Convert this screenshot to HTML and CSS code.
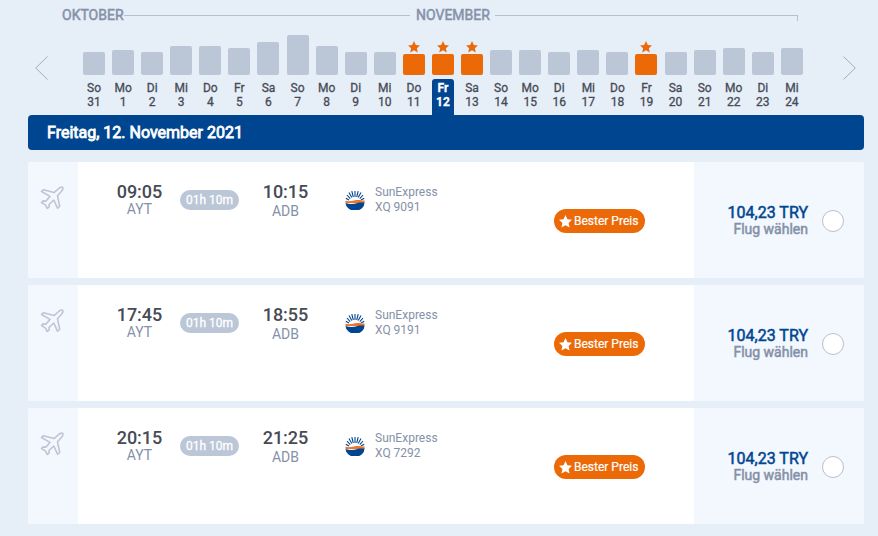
FILE: index.html
```html
<!DOCTYPE html>
<html lang="de">
<head>
    <meta charset="UTF-8">
    <meta name="viewport" content="width=device-width, initial-scale=1.0">
    <title>Flug wählen</title>
    <link rel="stylesheet" href="styles.css">
</head>
<body>
    <svg class="symbols" width="0" height="0">
        <symbol id="star" viewBox="0 0 24 24">
            <path d="M12 0l3.600 8 8.400.9-6.300 5.700 1.800 8.400L12 18.700 4.500 23l1.800-8.400L0 8.900 8.400 8z"/>
        </symbol>
        <symbol id="plane" viewBox="0 0 24 24">
            <path d="M14 6.600L19.300 2Q21.800.3 22.700 1.300Q23.500 2.700 21.500 5.200L17.500 9.800L19.700 20.200L17.600 22.300L13.800 14L9 18.500L9.200 20.800L7.300 22.500L5.300 18.900L1.500 16.600L3.200 14.900L5.800 15.200L10 10.400L1.500 5.500L3.500 3.700Z"/>
        </symbol>
        <symbol id="sun" viewBox="0 0 20 20">
            <path class="sun-rays" d="M10 7V1M8.300 7L6.800 1.200M11.700 7L13.200 1.200M6.800 7.500L4 2.500M13.200 7.500L16 2.500M5.200 8.600L2 5M14.800 8.600L18 5M4 10L.8 8.200M16 10L19.200 8.200"/>
            <path class="sun-sand" d="M.5 10.700C5 12 8 10.300 12 10S17 11 19.500 10.300V13H.5z"/>
            <path class="sun-sea" d="M.5 13C5 14.500 9 14 12.500 13S17 12.900 19.500 12.500A9.500 8 0 0 1 .5 13z"/>
        </symbol>
    </svg>

    <div class="calendar">
        <div class="months">
            <span class="month">OKTOBER</span>
            <span class="line"></span>
            <span class="month november">NOVEMBER</span>
            <span class="line line-end"></span>
        </div>
        <div class="week">
            <svg class="arrow" viewBox="0 0 13 24"><path d="M12.500 .5L.700 12l11.800 11.500"/></svg>
            <div class="days" id="days"></div>
            <svg class="arrow" viewBox="0 0 13 24"><path d="M.5 .5L12.300 12 .5 23.500"/></svg>
        </div>
    </div>

    <h2>Freitag, 12. November 2021</h2>
    <div class="flights" id="flights"></div>

    <script>
        const names = ['So', 'Mo', 'Di', 'Mi', 'Do', 'Fr', 'Sa'];
        const heights = [23, 25, 23, 29, 29, 27, 33, 40, 29, 23, 23, 21, 21, 21, 25, 25, 23, 25, 23, 21, 23, 25, 27, 23, 27];
        const best = [11, 12, 13, 19];
        const selected = 12;

        const flights = [
            { start: '09:05', end: '10:15', number: 'XQ 9091' },
            { start: '17:45', end: '18:55', number: 'XQ 9191' },
            { start: '20:15', end: '21:25', number: 'XQ 7292' }
        ];

        document.getElementById('days').innerHTML = heights.map((height, i) => {
            const isBest = best.includes(i);
            return `
                <div class="day ${isBest ? 'best' : ''} ${i === selected ? 'selected' : ''}">
                    <div class="bar-area">
                        ${isBest ? '<svg class="bar-star"><use href="#star"/></svg>' : ''}
                        <div class="bar" style="height: ${height}px"></div>
                    </div>
                    <div class="date">${names[i % 7]}<br>${i || 31}</div>
                </div>`;
        }).join('');

        document.getElementById('flights').innerHTML = flights.map(flight => `
            <div class="flight">
                <div class="side"><svg class="plane"><use href="#plane"/></svg></div>
                <div class="details">
                    <div class="airport"><b>${flight.start}</b><span>AYT</span></div>
                    <div class="duration">01h 10m</div>
                    <div class="airport arrival"><b>${flight.end}</b><span>ADB</span></div>
                    <svg class="logo"><use href="#sun"/></svg>
                    <div class="airline">SunExpress<br>${flight.number}</div>
                    <div class="badge"><svg><use href="#star"/></svg>Bester Preis</div>
                </div>
                <div class="price">
                    <div class="amount"><b>104,23 TRY</b><span>Flug wählen</span></div>
                    <div class="radio"></div>
                </div>
            </div>`).join('');
    </script>
</body>
</html>
```
FILE: styles.css
```css
* {
    box-sizing: border-box;
}
body {
    font-family: Roboto, "Liberation Sans", sans-serif;
    margin: 0;
    padding: 0 14px 0 28px;
    height: 536px;
    overflow: hidden;
    background-color: #e6eef8;
    color: #464b55;
}
.symbols {
    display: block;
}
.calendar {
    height: 115px;
}
.months {
    display: flex;
    align-items: center;
    height: 30px;
    padding: 0 66px 0 34px;
}
.month {
    width: 62px;
    font-size: 14px;
    font-weight: 400;
    -webkit-text-stroke: 0.5px;
    color: #8591a8;
}
.november {
    width: 75px;
    margin: 0 4px 0 6px;
}
.line {
    width: 286px;
    height: 1px;
    background-color: #b5c0d1;
}
.line-end {
    flex: 1;
    height: 6px;
    margin-top: 5px;
    background: none;
    border-top: 1px solid #b5c0d1;
    border-right: 1px solid #b5c0d1;
}
.week {
    display: flex;
    height: 85px;
    padding: 0 8px 0 7px;
    justify-content: space-between;
}
.arrow {
    width: 13px;
    height: 24px;
    margin-top: 26px;
    fill: none;
    stroke: #a3acba;
}
.days {
    display: flex;
    justify-content: space-between;
    width: 720px;
    margin-right: 5px;
}
.day {
    width: 22px;
}
.bar-area {
    display: flex;
    flex-direction: column;
    justify-content: flex-end;
    align-items: center;
    height: 45px;
}
.bar {
    width: 22px;
    border-radius: 2px;
    background-color: #bbc6d7;
}
.bar-star {
    width: 12px;
    height: 12px;
    margin-bottom: 1px;
    fill: #ec6907;
}
.best .bar {
    background-color: #ec6907;
}
.date {
    height: 36px;
    margin-top: 4px;
    padding-top: 2px;
    border-radius: 3px 3px 0 0;
    font-size: 12px;
    font-weight: 400;
    -webkit-text-stroke: 0.3px;
    line-height: 14px;
    text-align: center;
}
.selected .date {
    background-color: #004590;
    color: #fff;
    font-weight: bold;
}
h2 {
    height: 35px;
    margin: 0 0 12px;
    padding-left: 19px;
    border-radius: 4px;
    background-color: #004590;
    color: #fff;
    font-size: 16px;
    font-weight: 400;
    -webkit-text-stroke: 0.8px;
    line-height: 35px;
}
.flights {
    display: grid;
    gap: 7px;
}
.flight {
    display: flex;
    height: 116px;
    border-radius: 3px;
    overflow: hidden;
    background-color: #fff;
}
.side {
    width: 50px;
    padding: 24px 0 0 12px;
    background-color: #f3f7fe;
}
.plane {
    width: 24px;
    height: 24px;
    fill: none;
    stroke: #bcc5d5;
    stroke-width: 1.6;
    stroke-linejoin: round;
}
.details {
    display: flex;
    align-items: flex-start;
    width: 616px;
    padding-left: 37px;
}
.airport {
    width: 49px;
    padding-top: 19px;
    text-align: center;
}
.airport b, .airport span {
    display: block;
}
.airport b {
    font-size: 18px;
    font-weight: 500;
    line-height: 21px;
}
.airport span {
    color: #8591a8;
    font-size: 14px;
    line-height: 15px;
}
.arrival span {
    margin-top: 2px;
}
.duration {
    width: 59px;
    height: 20px;
    margin: 28px 22px 0 16px;
    border-radius: 10px;
    background-color: #bbc6d7;
    color: #fff;
    font-size: 12px;
    font-weight: 400;
    -webkit-text-stroke: 0.3px;
    line-height: 20px;
    text-align: center;
}
.logo {
    width: 20px;
    height: 20px;
    margin: 28px 10px 0 35px;
}
.sun-rays {
    fill: none;
    stroke: #004590;
    stroke-width: 1.1;
}
.sun-sand {
    fill: #ec762b;
}
.sun-sea {
    fill: #004590;
}
.airline {
    width: 179px;
    padding-top: 23px;
    color: #8591a8;
    font-size: 12px;
    line-height: 15px;
}
.badge {
    display: flex;
    align-items: center;
    width: 91px;
    height: 24px;
    margin-top: 47px;
    padding-left: 5px;
    border-radius: 12px;
    background-color: #ec6907;
    color: #fff;
    font-size: 12px;
    font-weight: 400;
    -webkit-text-stroke: 0.2px;
    white-space: nowrap;
}
.badge svg {
    width: 13px;
    height: 13px;
    margin-right: 2px;
    fill: #fff;
}
.price {
    display: flex;
    flex: 1;
    align-items: center;
    justify-content: flex-end;
    padding: 1px 20px 0 0;
    background-color: #f3f7fe;
}
.amount {
    padding-top: 1px;
    text-align: right;
}
.amount b, .amount span {
    display: block;
    font-weight: 400;
    -webkit-text-stroke: 0.5px;
    line-height: 17px;
}
.amount b {
    color: #004590;
    font-size: 16px;
}
.amount span {
    color: #8591a8;
    font-size: 14px;
}
.radio {
    width: 22px;
    height: 22px;
    margin-left: 14px;
    border: 1px solid #b9c0cc;
    border-radius: 50%;
    background-color: #fff;
}
```
